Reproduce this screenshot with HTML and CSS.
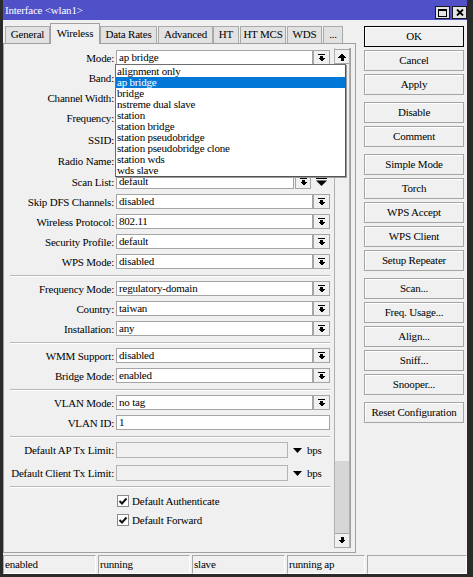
FILE: index.html
```html
<!DOCTYPE html>
<html>
<head>
<meta charset="utf-8">
<title>Interface &lt;wlan1&gt;</title>
<link rel="stylesheet" href="styles.css">
</head>
<body>
<div class="win">
  <div class="title">
    <span class="title-text">Interface &lt;wlan1&gt;</span>
    <div class="tbtns">
      <div class="tb"><svg width="9" height="8" viewBox="0 0 9 8" shape-rendering="crispEdges"><rect x="0.5" y="0.5" width="8" height="7" fill="none" stroke="#000"/><rect x="0" y="0" width="9" height="2" fill="#000"/></svg></div>
      <div class="tb"><svg width="8" height="7" viewBox="0 0 8 7"><path d="M1 0.5L7 6.5M7 0.5L1 6.5" stroke="#000" stroke-width="1.8"/></svg></div>
    </div>
  </div>
  <div class="main">
    <div class="leftcol">
      <div class="tabs">
        <div class="tab t-gen">General</div>
        <div class="tab sel t-wir">Wireless</div>
        <div class="tab t-dr">Data Rates</div>
        <div class="tab t-adv">Advanced</div>
        <div class="tab t-ht">HT</div>
        <div class="tab t-htm">HT MCS</div>
        <div class="tab t-wds">WDS</div>
        <div class="tab t-more">...</div>
      </div>
      <div class="panel">
        <div class="view">
          <div class="form">
            <div class="row"><span class="lbl">Mode:</span><div class="inp">ap bridge</div><div class="dd"><svg class="ic" width="7" height="8" viewBox="0 0 7 8" shape-rendering="crispEdges"><rect x="0" y="0" width="7" height="1"/><rect x="2" y="2" width="3" height="2"/><path d="M0 4H7L3.5 7.5Z"/></svg></div></div>
            <div class="row"><span class="lbl">Band:</span><div class="inp"></div><div class="dd"></div></div>
            <div class="row"><span class="lbl">Channel Width:</span><div class="inp"></div><div class="dd"></div></div>
            <div class="row"><span class="lbl">Frequency:</span><div class="inp"></div><div class="dd"></div></div>
            <div class="row m2"><span class="lbl">SSID:</span><div class="inp"></div><div class="dd"></div></div>
            <div class="row m1"><span class="lbl">Radio Name:</span><div class="inp wide"></div></div>
            <div class="row m1"><span class="lbl">Scan List:</span><div class="inp scan">default</div><div class="dd sdd"><svg class="ic" width="7" height="8" viewBox="0 0 7 8" shape-rendering="crispEdges"><rect x="0" y="0" width="7" height="1"/><rect x="2" y="2" width="3" height="2"/><path d="M0 4H7L3.5 7.5Z"/></svg></div><svg class="plain" width="11" height="9" viewBox="0 0 11 9"><rect x="0" y="0" width="11" height="2"/><path d="M0 3.5H11L5.5 9Z"/></svg></div>
            <div class="row"><span class="lbl">Skip DFS Channels:</span><div class="inp">disabled</div><div class="dd"><svg class="ic" width="7" height="8" viewBox="0 0 7 8" shape-rendering="crispEdges"><rect x="0" y="0" width="7" height="1"/><rect x="2" y="2" width="3" height="2"/><path d="M0 4H7L3.5 7.5Z"/></svg></div></div>
            <div class="row"><span class="lbl">Wireless Protocol:</span><div class="inp">802.11</div><div class="dd"><svg class="ic" width="7" height="8" viewBox="0 0 7 8" shape-rendering="crispEdges"><rect x="0" y="0" width="7" height="1"/><rect x="2" y="2" width="3" height="2"/><path d="M0 4H7L3.5 7.5Z"/></svg></div></div>
            <div class="row"><span class="lbl">Security Profile:</span><div class="inp">default</div><div class="dd"><svg class="ic" width="7" height="8" viewBox="0 0 7 8" shape-rendering="crispEdges"><rect x="0" y="0" width="7" height="1"/><rect x="2" y="2" width="3" height="2"/><path d="M0 4H7L3.5 7.5Z"/></svg></div></div>
            <div class="row"><span class="lbl">WPS Mode:</span><div class="inp">disabled</div><div class="dd"><svg class="ic" width="7" height="8" viewBox="0 0 7 8" shape-rendering="crispEdges"><rect x="0" y="0" width="7" height="1"/><rect x="2" y="2" width="3" height="2"/><path d="M0 4H7L3.5 7.5Z"/></svg></div></div>
            <div class="sep"></div>
            <div class="row first"><span class="lbl">Frequency Mode:</span><div class="inp">regulatory-domain</div><div class="dd"><svg class="ic" width="7" height="8" viewBox="0 0 7 8" shape-rendering="crispEdges"><rect x="0" y="0" width="7" height="1"/><rect x="2" y="2" width="3" height="2"/><path d="M0 4H7L3.5 7.5Z"/></svg></div></div>
            <div class="row"><span class="lbl">Country:</span><div class="inp">taiwan</div><div class="dd"><svg class="ic" width="7" height="8" viewBox="0 0 7 8" shape-rendering="crispEdges"><rect x="0" y="0" width="7" height="1"/><rect x="2" y="2" width="3" height="2"/><path d="M0 4H7L3.5 7.5Z"/></svg></div></div>
            <div class="row"><span class="lbl">Installation:</span><div class="inp">any</div><div class="dd"><svg class="ic" width="7" height="8" viewBox="0 0 7 8" shape-rendering="crispEdges"><rect x="0" y="0" width="7" height="1"/><rect x="2" y="2" width="3" height="2"/><path d="M0 4H7L3.5 7.5Z"/></svg></div></div>
            <div class="sep"></div>
            <div class="row first"><span class="lbl">WMM Support:</span><div class="inp">disabled</div><div class="dd"><svg class="ic" width="7" height="8" viewBox="0 0 7 8" shape-rendering="crispEdges"><rect x="0" y="0" width="7" height="1"/><rect x="2" y="2" width="3" height="2"/><path d="M0 4H7L3.5 7.5Z"/></svg></div></div>
            <div class="row"><span class="lbl">Bridge Mode:</span><div class="inp">enabled</div><div class="dd"><svg class="ic" width="7" height="8" viewBox="0 0 7 8" shape-rendering="crispEdges"><rect x="0" y="0" width="7" height="1"/><rect x="2" y="2" width="3" height="2"/><path d="M0 4H7L3.5 7.5Z"/></svg></div></div>
            <div class="sep"></div>
            <div class="row first"><span class="lbl">VLAN Mode:</span><div class="inp">no tag</div><div class="dd"><svg class="ic" width="7" height="8" viewBox="0 0 7 8" shape-rendering="crispEdges"><rect x="0" y="0" width="7" height="1"/><rect x="2" y="2" width="3" height="2"/><path d="M0 4H7L3.5 7.5Z"/></svg></div></div>
            <div class="row"><span class="lbl">VLAN ID:</span><div class="inp wide">1</div></div>
            <div class="sep"></div>
            <div class="row tx first-tx"><span class="lbl">Default AP Tx Limit:</span><div class="inp off"></div><svg class="tri" width="9" height="5" viewBox="0 0 9 5"><path d="M0 0H9L4.5 5Z"/></svg><span class="unit">bps</span></div>
            <div class="row tx"><span class="lbl">Default Client Tx Limit:</span><div class="inp off"></div><svg class="tri" width="9" height="5" viewBox="0 0 9 5"><path d="M0 0H9L4.5 5Z"/></svg><span class="unit">bps</span></div>
            <div class="sep sep-last"></div>
            <div class="chkrow"><span class="chk"><svg width="10" height="10" viewBox="0 0 10 10"><path d="M1.5 5L4 7.5L8.5 2.5" fill="none" stroke="#111" stroke-width="2"/></svg></span><span>Default Authenticate</span></div>
            <div class="chkrow"><span class="chk"><svg width="10" height="10" viewBox="0 0 10 10"><path d="M1.5 5L4 7.5L8.5 2.5" fill="none" stroke="#111" stroke-width="2"/></svg></span><span>Default Forward</span></div>

            <div class="list">
              <div class="item">alignment only</div>
              <div class="item hi">ap bridge</div>
              <div class="item">bridge</div>
              <div class="item">nstreme dual slave</div>
              <div class="item">station</div>
              <div class="item">station bridge</div>
              <div class="item">station pseudobridge</div>
              <div class="item">station pseudobridge clone</div>
              <div class="item">station wds</div>
              <div class="item">wds slave</div>
            </div>
          </div>
          <div class="sb">
            <div class="sbb"><svg width="8" height="8" viewBox="0 0 8 8" shape-rendering="crispEdges"><path d="M0 4.5L4 0.5L8 4.5Z"/><rect x="2.5" y="4.5" width="3" height="3"/></svg></div>
            <div class="track"></div>
            <div class="thumb"></div>
            <div class="sbb"><svg width="8" height="7" viewBox="0 0 8 7" shape-rendering="crispEdges"><rect x="2.5" y="0" width="3" height="2.5"/><path d="M0 2.5H8L4 6.5Z"/></svg></div>
          </div>
        </div>
      </div>
    </div>
    <div class="rightcol">
      <div class="btn def">OK</div>
      <div class="btn">Cancel</div>
      <div class="btn">Apply</div>
      <div class="btn grp">Disable</div>
      <div class="btn">Comment</div>
      <div class="btn grp">Simple Mode</div>
      <div class="btn">Torch</div>
      <div class="btn">WPS Accept</div>
      <div class="btn">WPS Client</div>
      <div class="btn">Setup Repeater</div>
      <div class="btn grp">Scan...</div>
      <div class="btn">Freq. Usage...</div>
      <div class="btn">Align...</div>
      <div class="btn">Sniff...</div>
      <div class="btn">Snooper...</div>
      <div class="btn grp">Reset Configuration</div>
    </div>
  </div>
  <div class="status">
    <div class="cell c1">enabled</div>
    <div class="cell c2">running</div>
    <div class="cell c3">slave</div>
    <div class="cell c4">running ap</div>
    <div class="cell c5"></div>
  </div>
</div>
</body>
</html>
```

FILE: styles.css
```css
* { box-sizing: border-box; }
html, body { margin: 0; padding: 0; background: #f0f0f0; }
body {
  font-family: "Liberation Serif", "Times New Roman", serif;
  font-size: 11px;
  letter-spacing: -0.2px;
  color: #000;
}
.win {
  width: 473px;
  height: 577px;
  border-left: 3px solid #2b2b2b;
  border-right: 6px solid #2b2b2b;
  border-bottom: 3px solid #2b2b2b;
  background: #f0f0f0;
  display: flex;
  flex-direction: column;
}
.title {
  height: 20px;
  flex: none;
  background: #5050c8;
  color: #fff;
  display: flex;
  justify-content: space-between;
  align-items: flex-end;
  padding: 0 0 1px 2px;
}
.title-text { line-height: 13px; padding-bottom: 2px; }
.tbtns { display: flex; gap: 2px; }
.tb {
  width: 15px;
  height: 13px;
  background: #e4e4e4;
  border: 1px solid #1a1a1a;
  display: flex;
  align-items: center;
  justify-content: center;
}
.main {
  height: 534px;
  flex: none;
  display: flex;
}
.leftcol { width: 353px; display: flex; flex-direction: column; }
.tabs {
  height: 23px;
  display: flex;
  align-items: flex-end;
  padding-left: 2px;
  position: relative;
  z-index: 1;
}
.tab {
  height: 17px;
  background: #e2e2e2;
  border: 1px solid #aaaaaa;
  border-bottom: none;
  text-align: center;
  line-height: 15px;
  flex: none;
}
.tab.sel {
  height: 21px;
  background: #f0f0f0;
  line-height: 19px;
  margin-bottom: -1px;
  border-color: #a0a0a0;
}
.t-gen { width: 45px; }
.t-wir { width: 50px; }
.t-dr { width: 57px; margin-right: 1px; }
.t-adv { width: 55px; }
.t-ht { width: 26px; margin-right: 1px; }
.t-htm { width: 46px; margin-right: 1px; }
.t-wds { width: 35px; margin-right: 1px; }
.t-more { width: 20px; }
.panel {
  height: 510px;
  border: 1px solid #a0a0a0;
  padding: 4px 4px 4px 4px;
}
.view {
  height: 500px;
  display: flex;
  border-right: 1px solid #a0a0a0;
}
.form {
  position: relative;
  width: 326px;
  padding-top: 2px;
}
.row {
  display: flex;
  align-items: center;
  height: 15px;
  margin-top: 5px;
  white-space: nowrap;
}
.row:first-child { margin-top: 0; }
.row.m2 { margin-top: 7px; }
.row.m1 { margin-top: 6px; }
.row.first { margin-top: 0; }
.lbl {
  width: 106px;
  text-align: right;
  margin-right: 2px;
  flex: none;
  display: flex;
  justify-content: flex-end;
}
.inp {
  width: 197px;
  height: 15px;
  background: #fff;
  border: 1px solid #a5a5a5;
  line-height: 13px;
  padding-left: 2px;
  flex: none;
  overflow: hidden;
}
.inp.wide { width: 214px; }
.inp.scan { width: 178px; }
.inp.off { width: 172px; height: 16px; background: #f0f0f0; border-color: #b4b4b4; }
.dd {
  width: 17px;
  height: 15px;
  border: 1px solid #a5a5a5;
  background: #f0f0f0;
  display: flex;
  align-items: center;
  justify-content: center;
  flex: none;
}
.dd.sdd { width: 16px; margin-left: 1px; }
.ic { fill: #000; }
.plain { margin-left: 5px; fill: #000; }
.tri { margin-left: 5px; fill: #000; }
.unit { margin-left: 5px; }
.row.tx { height: 16px; margin-top: 7px; }
.row.first-tx { margin-top: 0; }
.sep {
  margin: 6px 0 4px 2px;
  width: 320px;
  height: 2px;
  border-top: 1px solid #b8b8b8;
  border-bottom: 1px solid #ffffff;
}
.sep + .row.first-tx { margin-top: 3px; }
.sep.sep-last { margin: 5px 0 7px 2px; }
.chkrow {
  display: flex;
  align-items: center;
  height: 12px;
  padding-left: 109px;
  margin-bottom: 7px;
  white-space: nowrap;
}
.chk {
  width: 12px;
  height: 12px;
  border: 1px solid #8a8a8a;
  background: #fff;
  margin-right: 3px;
  display: flex;
  align-items: center;
  justify-content: center;
}
.list {
  position: absolute;
  left: 107px;
  top: 16px;
  width: 231px;
  background: #fff;
  border: 1px solid #6e6e6e;
  border-right-color: #555;
  border-bottom-color: #555;
  box-shadow: 1px 1px 0 #9a9a9a;
  padding-top: 1px;
}
.item {
  height: 11px;
  line-height: 11px;
  padding-left: 1px;
  white-space: nowrap;
}
.item.hi { background: #0078d7; color: #fff; }
.sb {
  width: 16px;
  display: flex;
  flex-direction: column;
  border-left: 1px solid #b0b0b0;
  border-right: 1px solid #b0b0b0;
  padding-top: 1px;
}
.sbb {
  height: 15px;
  border-top: 1px solid #a5a5a5;
  border-bottom: 1px solid #a5a5a5;
  background: #f0f0f0;
  display: flex;
  align-items: center;
  justify-content: center;
  flex: none;
}
.sbb svg { fill: #000; }
.track { flex: 1; background: #f0f0f0; }
.thumb { height: 72px; background: #d6d6d6; flex: none; }
.rightcol {
  width: 100px;
  margin-left: 8px;
  padding-top: 6px;
  display: flex;
  flex-direction: column;
}
.btn {
  height: 21px;
  border: 1px solid #a5a5a5;
  background: #f0f0f0;
  box-shadow: inset 1px 1px 0 #ffffff;
  text-align: center;
  line-height: 19px;
  margin-bottom: 3px;
  white-space: nowrap;
}
.btn.def { border-color: #000; }
.btn.grp { margin-top: 4px; }
.status {
  height: 19px;
  margin-top: 1px;
  display: flex;
  gap: 2px;
  flex: none;
}
.cell {
  height: 19px;
  border: 1px solid #a8a8a8;
  border-right-color: #fff;
  border-bottom-color: #fff;
  line-height: 17px;
  padding-left: 1px;
  white-space: nowrap;
}
.c1 { width: 93px; }
.c2 { width: 92px; }
.c3 { width: 93px; }
.c4 { width: 78px; }
.c5 { width: 100px; }
```
